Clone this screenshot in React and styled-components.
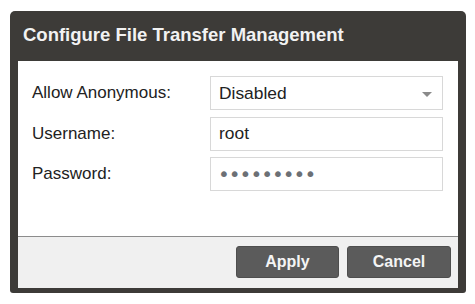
import React from "react";
import styled, { createGlobalStyle } from "styled-components";

const Global = createGlobalStyle`
  html, body { margin: 0; padding: 0; background: #ffffff; }
  body { font-family: "Liberation Sans", Arial, sans-serif; }
  * { box-sizing: border-box; }
`;

const Page = styled.div`
  width: 475px;
  height: 304px;
  padding: 11px 9px 11px 10px;
`;

const Dialog = styled.div`
  width: 456px;
  height: 282px;
  background: #3d3b38;
  border-radius: 5px 5px 3px 3px;
  padding: 0 8px 5px 8px;
  display: flex;
  flex-direction: column;
`;

const TitleBar = styled.div`
  height: 50px;
  display: flex;
  align-items: center;
  padding-left: 5px;
  padding-bottom: 2px;
  color: #f2f2f2;
  font-weight: bold;
  font-size: 18.5px;
`;

const Body = styled.div`
  background: #ffffff;
  height: 175px;
  padding: 15px 15px 0 14px;
  display: flex;
  flex-direction: column;
  gap: 6.5px;
`;

const Row = styled.div`
  display: flex;
  align-items: center;
  height: 34px;
`;

const Label = styled.label`
  width: 178px;
  font-size: 17px;
  color: #222222;
`;

const Field = styled.div`
  flex: 1;
  height: 34px;
`;

const TextInput = styled.input`
  width: 100%;
  height: 100%;
  border: 1px solid #d8d8d8;
  background: #ffffff;
  padding: 0 ${(p) => (p.$masked ? "7px" : "8px")};
  font-family: ${(p) =>
    p.$masked ? '"DejaVu Sans", sans-serif' : '"Liberation Sans", Arial, sans-serif'};
  font-size: ${(p) => (p.$masked ? "20px" : "17.4px")};
  color: ${(p) => (p.$masked ? "#6c7075" : "#222222")};
  letter-spacing: ${(p) => (p.$masked ? "-1px" : "0")};
  outline: none;
`;

const SelectBox = styled.div`
  width: 100%;
  height: 100%;
  border: 1px solid #d8d8d8;
  background: #ffffff;
  padding: 0 8px;
  display: flex;
  align-items: center;
  justify-content: space-between;
  font-size: 17.4px;
  color: #222222;
`;

const Arrow = styled.span`
  width: 0;
  height: 0;
  border-left: 5.5px solid transparent;
  border-right: 5.5px solid transparent;
  border-top: 5px solid #8a8a8a;
  margin-right: 2px;
  margin-top: 2px;
`;

const Footer = styled.div`
  flex: 1;
  background: #f0f0f0;
  border-top: 1px solid #8c8c8c;
  display: flex;
  justify-content: flex-end;
  align-items: flex-start;
  padding: 9px 7px 0 0;
  gap: 8px;
`;

const Button = styled.button`
  width: ${(p) => p.$w}px;
  height: 32px;
  background: #5b5b5b;
  border: 1px solid #4e4e4e;
  border-radius: 3px;
  color: #f4f4f4;
  font-family: "Liberation Sans", Arial, sans-serif;
  font-weight: bold;
  font-size: 16px;
  padding: 0;
`;

export default function App() {
  return (
    <>
      <Global />
      <Page>
        <Dialog>
          <TitleBar>Configure File Transfer Management</TitleBar>
          <Body>
            <Row>
              <Label>Allow Anonymous:</Label>
              <Field>
                <SelectBox>
                  <span>Disabled</span>
                  <Arrow />
                </SelectBox>
              </Field>
            </Row>
            <Row>
              <Label>Username:</Label>
              <Field>
                <TextInput type="text" value="root" readOnly />
              </Field>
            </Row>
            <Row>
              <Label>Password:</Label>
              <Field>
                <TextInput type="password" value="123456789" readOnly $masked />
              </Field>
            </Row>
          </Body>
          <Footer>
            <Button $w={103}>Apply</Button>
            <Button $w={104}>Cancel</Button>
          </Footer>
        </Dialog>
      </Page>
    </>
  );
}
